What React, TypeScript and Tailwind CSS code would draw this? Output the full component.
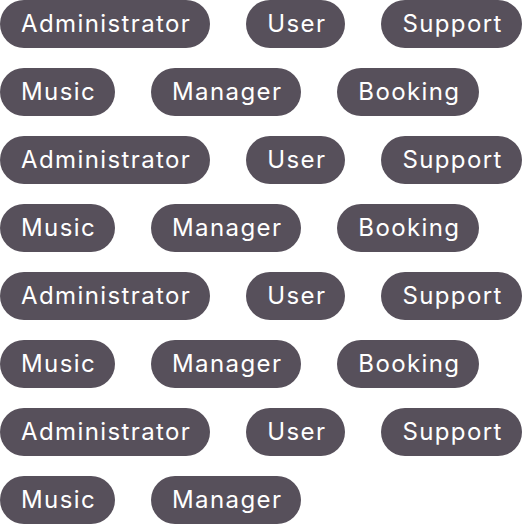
import React from "react";

const rowA = ["Administrator", "User", "Support"];
const rowB = ["Music", "Manager", "Booking"];
const rows = [rowA, rowB, rowA, rowB, rowA, rowB, rowA, ["Music", "Manager"]];

export default function App() {
  return (
    <div
      className="w-[524px] h-[524px] bg-white flex flex-col gap-5 overflow-hidden"
      style={{ fontFamily: "Inter, 'Noto Sans', sans-serif" }}
    >
      {rows.map((r, i) => (
        <div key={i} className="flex gap-9">
          {r.map((t, j) => (
            <span
              key={j}
              className="h-12 pl-[21px] pr-[19px] rounded-full bg-[#57505b] text-white text-[24px] leading-none flex items-center tracking-[0.058em] whitespace-nowrap"
            >
              {t}
            </span>
          ))}
        </div>
      ))}
    </div>
  );
}
